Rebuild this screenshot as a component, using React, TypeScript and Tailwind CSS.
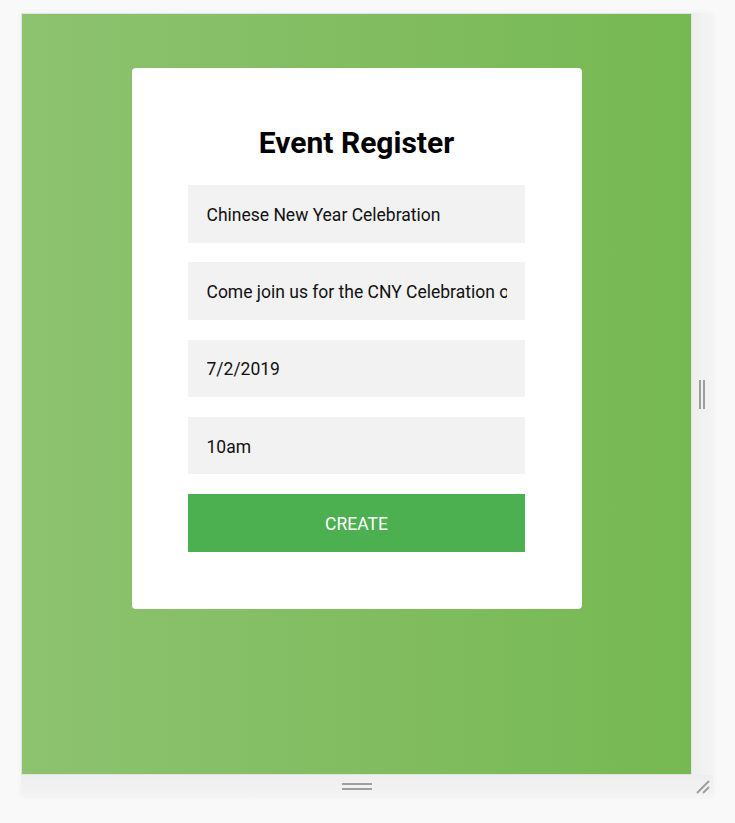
import React from "react";

const fields = [
  "Chinese New Year Celebration",
  "Come join us for the CNY Celebration on Thursday evening!",
  "7/2/2019",
  "10am",
];

const App: React.FC = () => {
  return (
    <div
      className="w-full h-screen bg-[#f9f9f9] pt-[13px] pl-[21px]"
      style={{ fontFamily: "Roboto, 'Liberation Sans', sans-serif" }}
    >
      <div className="w-[692px] flex flex-col shadow-[0_0_6px_rgba(0,0,0,0.04)]">
        <div className="flex">
          {/* preview area */}
          <div className="w-[671px] h-[762px] border border-[#e3e3e3] bg-linear-to-l from-[#76b852] to-[#8dc26f] pt-[54px]">
            <div className="w-[450px] mx-auto bg-white rounded-[4px] px-[56.25px] pt-[56px] pb-[57.5px]">
              <h1 className="text-[30px] leading-[37px] font-bold text-center text-black mb-[24px]">
                Event Register
              </h1>
              <form className="flex flex-col gap-[19.75px]" onSubmit={(e) => e.preventDefault()}>
                {fields.map((f) => (
                  <input
                    key={f}
                    type="text"
                    readOnly
                    value={f}
                    className="w-full h-[57.5px] px-[18.75px] pt-[2px] bg-[#f2f2f2] text-[17.5px] text-[#111] outline-none border-0"
                  />
                ))}
                <button
                  type="submit"
                  className="w-full h-[57.5px] pt-[2px] bg-[#4caf50] text-white uppercase text-[17.5px]"
                >
                  Create
                </button>
              </form>
            </div>
          </div>
          {/* right resize strip */}
          <div className="w-[21px] bg-linear-to-r from-[#eeeeee] to-[#f4f4f4] flex items-center justify-center gap-[2px] pr-[1px]">
            <div className="w-[2px] h-[29px] bg-[#9e9e9e]" />
            <div className="w-[2px] h-[29px] bg-[#9e9e9e]" />
          </div>
        </div>
        {/* bottom resize strip */}
        <div className="flex h-[22px] bg-linear-to-b from-[#eeeeee] to-[#f4f4f4]">
          <div className="w-[671px] flex flex-col items-center justify-center gap-[3px]">
            <div className="w-[30px] h-[2px] bg-[#9e9e9e]" />
            <div className="w-[30px] h-[2px] bg-[#9e9e9e]" />
          </div>
          <div className="w-[21px] flex items-center justify-center">
            <svg width="16" height="16" viewBox="0 0 16 16">
              <line x1="2" y1="15" x2="14" y2="3" stroke="#9e9e9e" strokeWidth="2" />
              <line x1="8" y1="15" x2="14" y2="9" stroke="#9e9e9e" strokeWidth="2" />
            </svg>
          </div>
        </div>
      </div>
    </div>
  );
};

export default App;
